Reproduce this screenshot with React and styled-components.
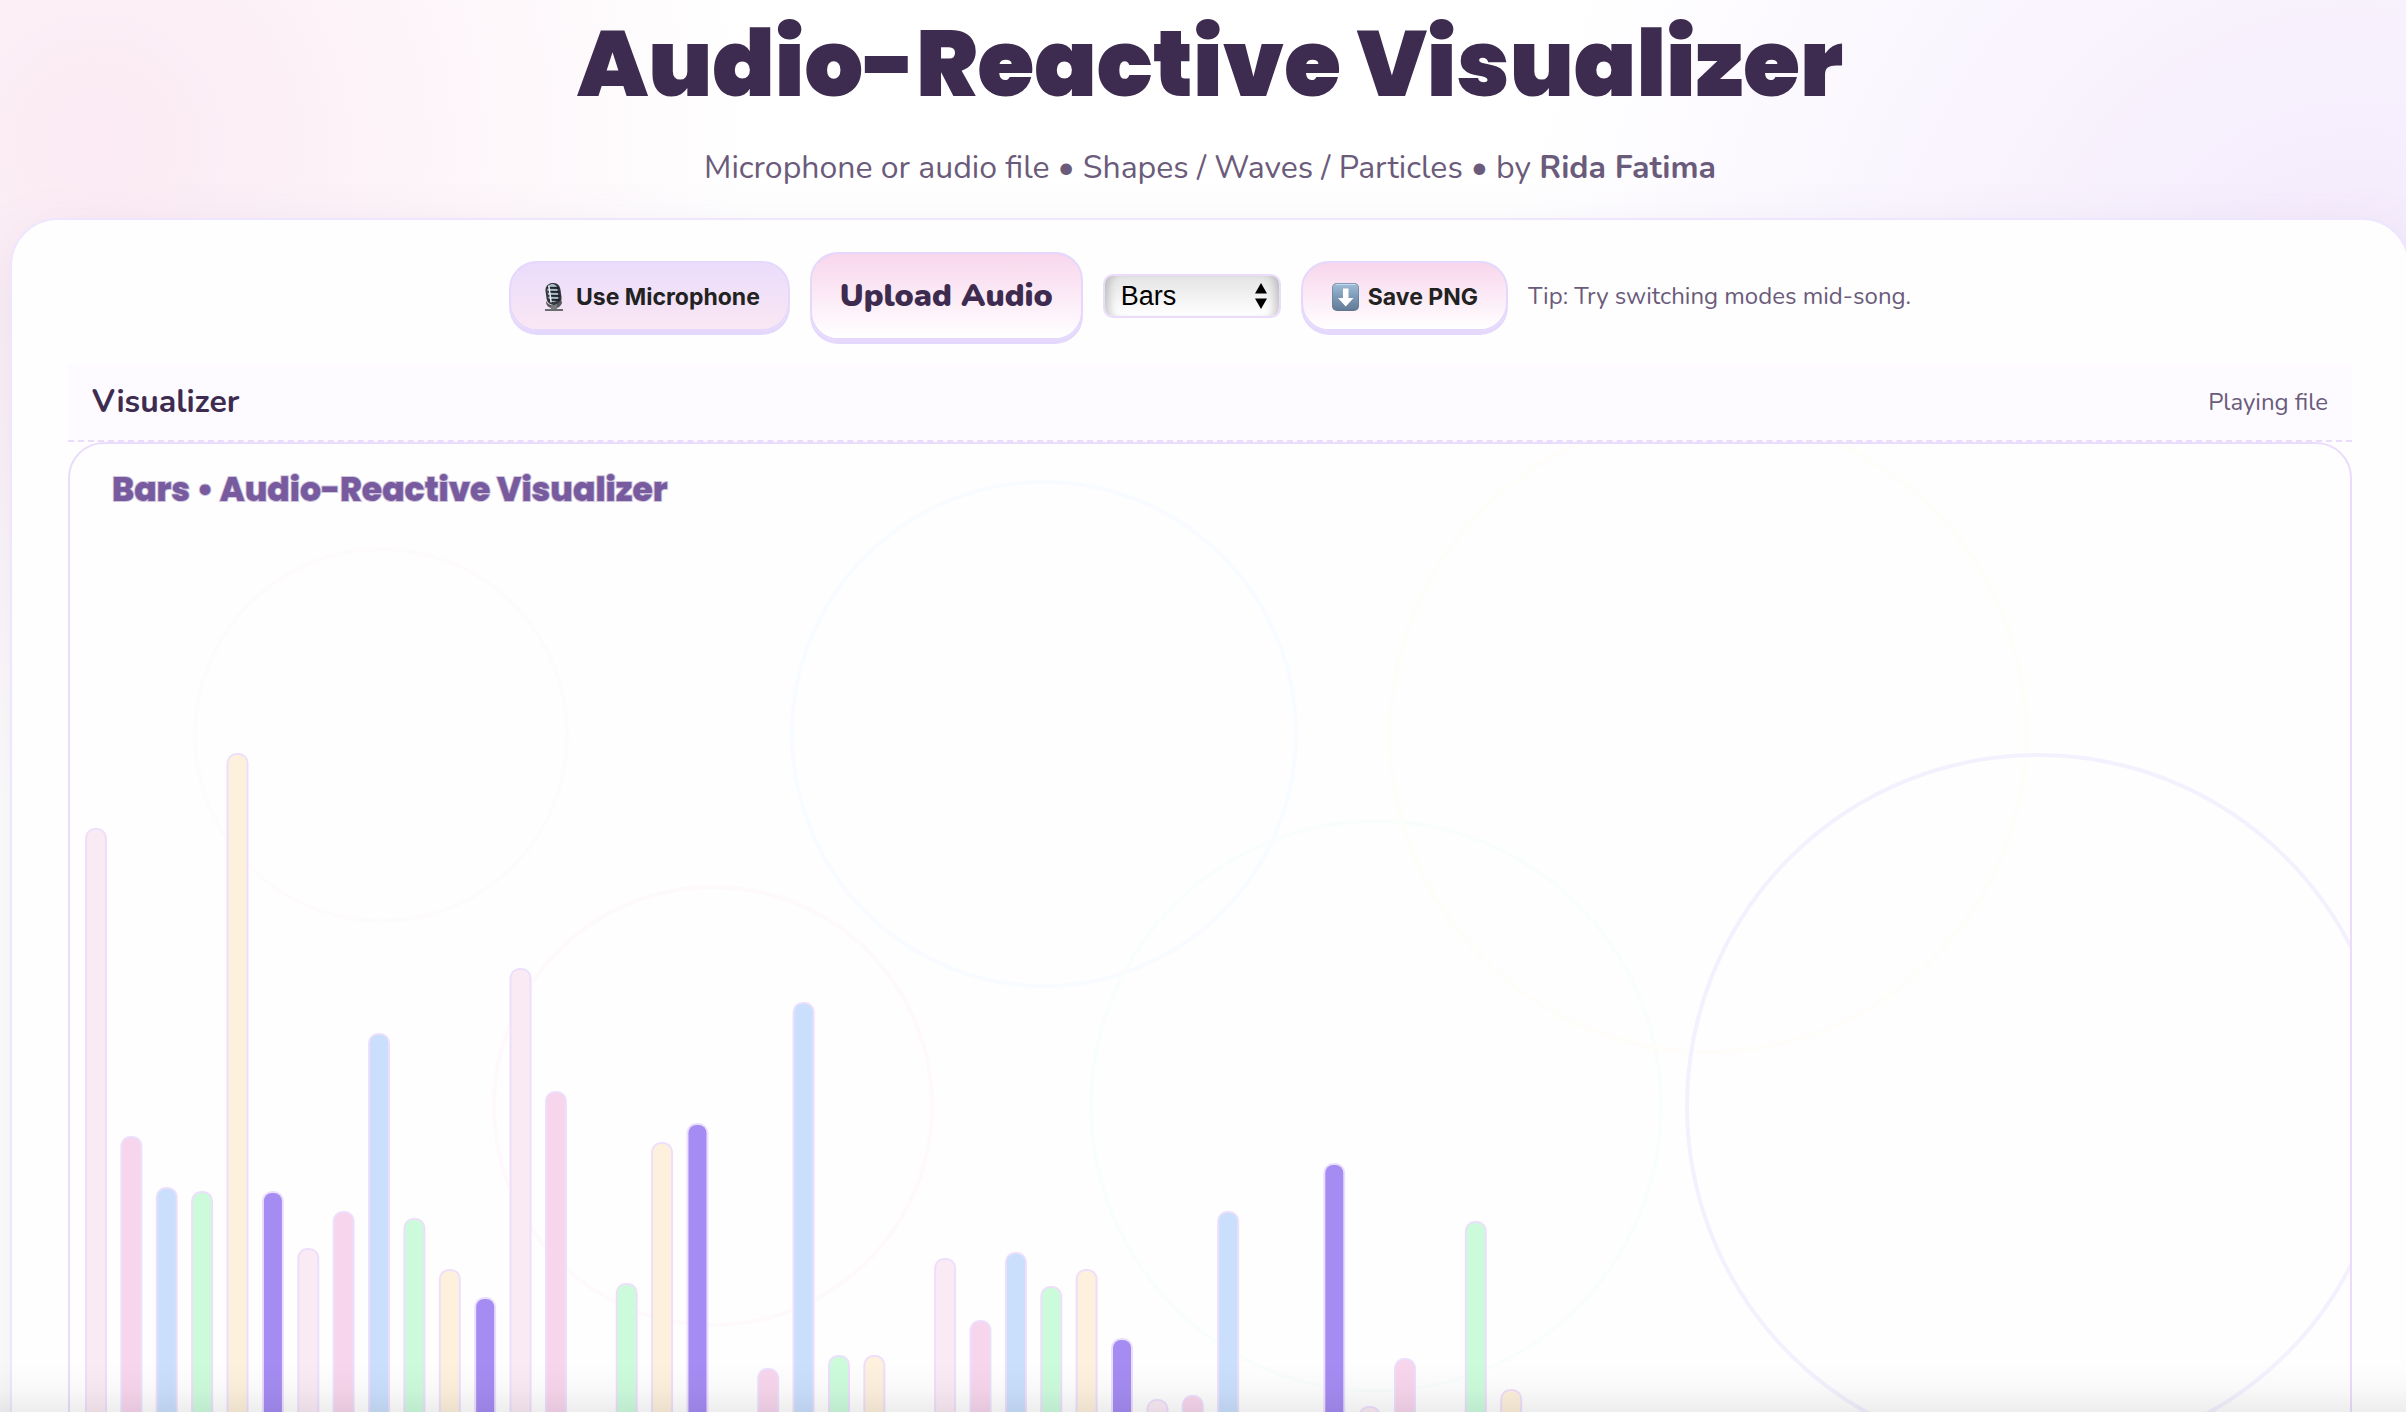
import React from "react";
import styled, { createGlobalStyle } from "styled-components";

const display = `Poppins, Inter, sans-serif`;
const body = `Nunito, Lato, sans-serif`;

const GlobalStyle = createGlobalStyle`
  * { box-sizing: border-box; }
  body { margin: 0; background: #fff; }
`;

const Page = styled.div`
  position: relative;
  height: 100vh;
  overflow: hidden;
  font-family: ${body};
  color: #3d2c4f;
  background:
    radial-gradient(circle at 4% 10%, #fbeaf3 0, rgba(251, 234, 243, 0) 660px),
    radial-gradient(circle at 98% 24%, #f3e9fc 0, rgba(243, 233, 252, 0) 860px),
    #ffffff;
`;

const Shell = styled.div`
  margin: 0 -4px 0 10px;
`;

const Header = styled.header`
  display: flex;
  flex-direction: column;
  align-items: center;
  gap: 20px;
  padding-bottom: 30px;
`;

const Title = styled.h1`
  margin: 0;
  font: 900 92px/128px ${display};
`;

const Subtitle = styled.p`
  margin: 0;
  font-size: 32px;
  line-height: 40px;
  color: #6b5b7b;
`;

const Card = styled.main`
  padding: 32px 56px;
  border: 2px solid #eee6ff;
  border-radius: 48px;
  background: #fefefe;
  box-shadow: 0 20px 60px rgba(110, 90, 150, 0.13);
`;

const Controls = styled.div`
  display: flex;
  align-items: center;
  justify-content: center;
  gap: 20px;
  margin-bottom: 24px;
`;

const Button = styled.button`
  display: flex;
  align-items: center;
  gap: 8px;
  height: ${(p) => (p.$large ? 88 : 70)}px;
  padding: ${(p) => (p.$large ? 0 : 2)}px 28px 0;
  border: 2px solid #e4d8fc;
  border-radius: 28px;
  background: linear-gradient(${(p) => p.$from}, ${(p) => p.$to});
  box-shadow: 0 4px 0 #e4d8fc;
  color: ${(p) => (p.$large ? "#3d2c4f" : "#222222")};
  font: ${(p) => (p.$large ? `900 32px/40px ${body}` : "700 23px/28px Inter, sans-serif")};
  white-space: nowrap;
`;

const SelectBox = styled.div`
  display: grid;
  align-items: center;
  width: 178px;

  > * { grid-area: 1 / 1; }
  > svg { justify-self: end; margin-right: 14px; pointer-events: none; }
`;

const ModeSelect = styled.select`
  appearance: none;
  width: 100%;
  height: 44px;
  padding: 0 16px;
  border: 2px solid #ecdcfb;
  border-radius: 10px;
  background: linear-gradient(#e4e4e4, #ffffff);
  box-shadow: inset 10px 0 8px -6px rgba(0, 0, 0, 0.2), inset -10px 0 8px -6px rgba(0, 0, 0, 0.2);
  color: #000;
  font: 27px/36px "Liberation Sans", Arial, sans-serif;
`;

const Note = styled.span`
  font-size: 24px;
  line-height: 32px;
  color: #6b5b7b;
`;

const PanelHead = styled.div`
  display: flex;
  align-items: center;
  justify-content: space-between;
  height: 78px;
  padding: 0 24px;
  border-bottom: 2px dashed #eaddfb;
  background: #fdfbff;
`;

const PanelTitle = styled.h2`
  margin: 0;
  font-size: 32px;
  line-height: 40px;
  font-weight: 700;
`;

const Stage = styled.div`
  overflow: hidden;
  border: 2px solid #eaddfb;
  border-radius: 36px;
  background: #fefefe;

  svg { display: block; width: 100%; }
`;

const StageLabel = styled.text`
  font: 800 33px ${display};
  fill: #775b9e;
  stroke: #775b9e;
  stroke-width: 2px;
  stroke-opacity: 0.35;
`;

const BottomFade = styled.div`
  position: fixed;
  inset: auto 0 0;
  height: 48px;
  background: linear-gradient(rgba(0, 0, 0, 0), rgba(0, 0, 0, 0.02) 50%, rgba(0, 0, 0, 0.065));
  pointer-events: none;
`;

const STAGE_HEIGHT = 1140;
const COLORS = ["#faeaf4", "#f7d5ec", "#c9dffc", "#ccfbdc", "#fdf0dc", "#a48cf2"];

/* Height of every frequency bin, low to high. */
const LEVELS = [
  756, 448, 397, 393, 831, 393, 336, 373, 551, 366, 315, 287, 616, 493, 0, 301, 442, 461, 0, 216, 582,
  229, 229, 0, 326, 264, 332, 298, 315, 246, 185, 189, 373, 0, 0, 421, 178, 226, 0, 363, 195,
];

const RINGS = [
  { x: 311, y: 291, r: 186, color: "#fefbfc" },
  { x: 643, y: 662, r: 219, color: "#fef9fb" },
  { x: 974, y: 290, r: 252, color: "#f8fbff" },
  { x: 1306, y: 662, r: 285, color: "#f9fefc" },
  { x: 1638, y: 290, r: 318, color: "#fffdf9" },
  { x: 1968, y: 662, r: 351, color: "#f4f1fe" },
];

function Mic() {
  return (
    <svg width="29" height="30" viewBox="0 0 29 30" aria-hidden="true">
      <g transform="rotate(-8 14 12)">
        <rect x="7" y="1" width="15" height="22" rx="7" fill="#34373d" />
        <rect x="9" y="2" width="10" height="18" rx="5" fill="#a9bccb" />
        <g stroke="#22252b" strokeWidth="2">
          <path d="M9 5l12 2M9 9l12 2M9 13l12 2M9 17l12 2" />
        </g>
        <path d="M11 3v17" stroke="#e7f1f8" strokeWidth="1.5" />
      </g>
      <path d="M7 19c3 6 12 6 15-2l1 4c-1 3-4 5-6 5h-5c-3-1-5-3-5-7z" fill="#55585a" />
      <path d="M12 23h6v4h-6z" fill="#77797a" />
      <path d="M6 27h18v2H6z" fill="#6c6e6d" />
    </svg>
  );
}

function Download() {
  return (
    <svg width="29" height="30" viewBox="0 0 29 30" aria-hidden="true">
      <defs>
        <linearGradient id="key" x1="0" y1="0" x2="0" y2="1">
          <stop offset="0" stopColor="#9fbdd8" />
          <stop offset="0.5" stopColor="#7d9ab8" />
          <stop offset="1" stopColor="#647b96" />
        </linearGradient>
      </defs>
      <rect x="1" y="1" width="27" height="28" rx="5" fill="#5f7690" />
      <rect x="1.5" y="1.5" width="26" height="26.5" rx="4.5" fill="url(#key)" />
      <path d="M5 2.5h19" stroke="#c4dbee" strokeWidth="1.2" strokeLinecap="round" />
      <path d="M12 6.500h5.500v9.500h5L14.750 24.500 7 16h5z" fill="#fff" />
    </svg>
  );
}

function Chevrons() {
  return (
    <svg width="12" height="26" viewBox="0 0 12 26" aria-hidden="true">
      <path d="M6 0l6 10.500H0zM6 26l6-10.500H0z" fill="#000" />
    </svg>
  );
}

function Visualization() {
  return (
    <svg viewBox={`0 0 2280 ${STAGE_HEIGHT}`} role="img" aria-label="Audio bars">
      {RINGS.map((ring) => (
        <circle key={ring.x} cx={ring.x} cy={ring.y} r={ring.r} fill="none" stroke={ring.color} strokeWidth="4" />
      ))}
      {LEVELS.map((level, i) =>
        level ? (
          <rect
            key={i}
            x={17 + i * 35.38}
            y={STAGE_HEIGHT - level + 2}
            width="18"
            height={level + 20}
            rx="8"
            fill={COLORS[i % COLORS.length]}
            stroke="#eddffc"
            strokeWidth="4"
            paintOrder="stroke"
          />
        ) : null
      )}
      <StageLabel x="42" y="57">Bars • Audio-Reactive Visualizer</StageLabel>
    </svg>
  );
}

export default function App() {
  return (
    <Page>
      <GlobalStyle />
      <Shell>
        <Header>
          <Title>Audio-Reactive Visualizer</Title>
          <Subtitle>
            Microphone or audio file • Shapes / Waves / Particles • by <strong>Rida Fatima</strong>
          </Subtitle>
        </Header>
        <Card>
          <Controls>
            <Button type="button" $from="#eadcfb" $to="#fae7f4">
              <Mic />
              Use Microphone
            </Button>
            <Button type="button" $large $from="#f8d6ed" $to="#ffffff">
              Upload Audio
            </Button>
            <SelectBox>
              <ModeSelect aria-label="Mode" defaultValue="Bars">
                <option>Bars</option>
                <option>Waves</option>
                <option>Particles</option>
              </ModeSelect>
              <Chevrons />
            </SelectBox>
            <Button type="button" $from="#f8d6ed" $to="#ffffff">
              <Download />
              Save PNG
            </Button>
            <Note>Tip: Try switching modes mid-song.</Note>
          </Controls>
          <PanelHead>
            <PanelTitle>Visualizer</PanelTitle>
            <Note>Playing file</Note>
          </PanelHead>
          <Stage>
            <Visualization />
          </Stage>
        </Card>
      </Shell>
      <BottomFade />
    </Page>
  );
}
